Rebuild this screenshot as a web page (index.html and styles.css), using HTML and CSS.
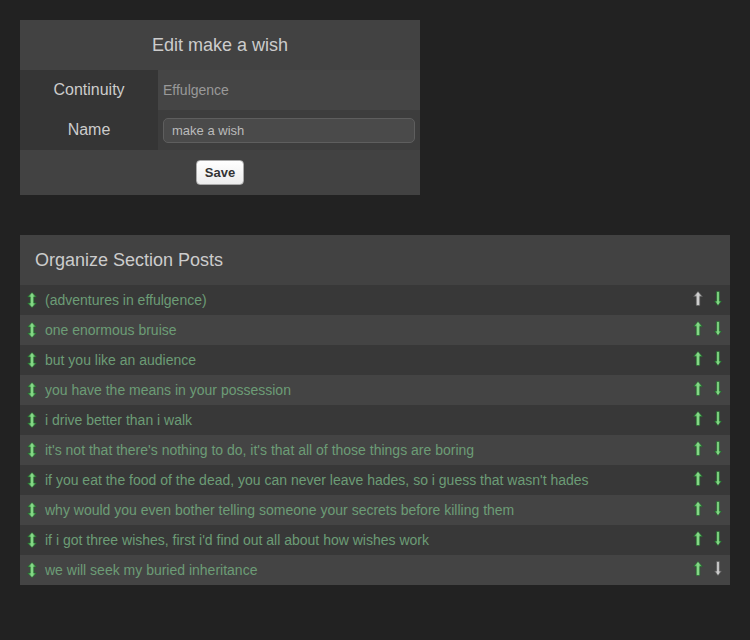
FILE: index.html
```html
<!DOCTYPE html>
<html>
<head>
<meta charset="utf-8">
<link rel="stylesheet" href="styles.css">
</head>
<body>
<div class="edit-box">
  <div class="edit-title">Edit make a wish</div>
  <div class="form-row">
    <div class="form-label">Continuity</div>
    <div class="form-value">Effulgence</div>
  </div>
  <div class="form-row">
    <div class="form-label">Name</div>
    <div class="form-value"><input class="text-input" type="text" value="make a wish"></div>
  </div>
  <div class="form-actions"><button class="save-btn">Save</button></div>
</div>

<div class="org-box">
  <div class="org-title">Organize Section Posts</div>
  <div class="post-list" id="list"></div>
</div>
<script src="app.js"></script>
</body>
</html>
```
FILE: app.js
```js
const posts = [
  "(adventures in effulgence)",
  "one enormous bruise",
  "but you like an audience",
  "you have the means in your possession",
  "i drive better than i walk",
  "it's not that there's nothing to do, it's that all of those things are boring",
  "if you eat the food of the dead, you can never leave hades, so i guess that wasn't hades",
  "why would you even bother telling someone your secrets before killing them",
  "if i got three wishes, first i'd find out all about how wishes work",
  "we will seek my buried inheritance"
];
const defs = `<defs>
<linearGradient id="g" x1="0" x2="1" y1="0" y2="0"><stop offset="0" stop-color="#2f8a3a"/><stop offset="0.5" stop-color="#8fe08f"/><stop offset="1" stop-color="#2f8a3a"/></linearGradient>
<linearGradient id="w" x1="0" x2="1" y1="0" y2="0"><stop offset="0" stop-color="#7a7a7a"/><stop offset="0.5" stop-color="#d8d8d8"/><stop offset="1" stop-color="#7a7a7a"/></linearGradient>
</defs>`;
const both = `<svg class="ico-both" width="10" height="16" viewBox="0 0 10 16"><path d="M5 0.5 L9.5 5 L6.8 5 L6.8 11 L9.5 11 L5 15.5 L0.5 11 L3.2 11 L3.2 5 L0.5 5 Z" fill="url(#g)" stroke="#1f6a2a" stroke-width="0.6"/></svg>`;
const up = (c) => `<svg class="ico-up" width="10" height="15" viewBox="0 0 10 15"><path d="M5 0.5 L9.5 5.5 L6.8 5.5 L6.8 14.5 L3.2 14.5 L3.2 5.5 L0.5 5.5 Z" fill="url(#${c})" stroke="${c==='g'?'#1f6a2a':'#5a5a5a'}" stroke-width="0.6"/></svg>`;
const down = (c) => `<svg class="ico-down" width="8" height="15" viewBox="0 0 8 15"><path d="M2.6 0.5 L5.4 0.5 L5.4 10 L7.5 10 L4 14.5 L0.5 10 L2.6 10 Z" fill="url(#${c})" stroke="${c==='g'?'#1f6a2a':'#5a5a5a'}" stroke-width="0.6"/></svg>`;
const list = document.getElementById('list');
let html = `<svg width="0" height="0" style="position:absolute">${defs}</svg>`;
posts.forEach((p, i) => {
  html += `<div class="post-row">
    <span class="drag">${both}</span>
    <a class="post-link">${p}</a>
    <span class="moves"><span class="mv">${up(i === 0 ? 'w' : 'g')}</span><span class="mv">${down(i === posts.length - 1 ? 'w' : 'g')}</span></span>
  </div>`;
});
list.innerHTML = html;
```
FILE: styles.css
```css
html, body { margin: 0; padding: 0; }
body {
  background: #222222;
  font-family: "Liberation Sans", Arial, sans-serif;
  padding: 20px;
  color: #cccccc;
}
.edit-box {
  width: 400px;
  background: #424242;
}
.edit-title {
  height: 50px;
  line-height: 50px;
  text-align: center;
  font-size: 18px;
  color: #cccccc;
}
.form-row {
  display: flex;
  height: 40px;
}
.form-label {
  width: 138px;
  background: #353535;
  font-size: 16px;
  color: #cccccc;
  text-align: center;
  line-height: 40px;
}
.form-row:nth-child(2) .form-value { background: #454545; }
.form-row:nth-child(3) .form-value { background: #3d3d3d; }
.form-value {
  flex: 1;
  display: flex;
  align-items: center;
  padding-left: 5px;
  padding-right: 5px;
  font-size: 14px;
  color: #999999;
}
.text-input {
  box-sizing: border-box;
  width: 100%;
  height: 25px;
  border: 1px solid #5e5e5e;
  border-radius: 5px;
  background: #4a4a4a;
  color: #bbbbbb;
  font-family: "Liberation Sans", Arial, sans-serif;
  font-size: 13px;
  padding: 0 8px;
  outline: none;
}
.form-actions {
  height: 45px;
  display: flex;
  justify-content: center;
  align-items: center;
}
.save-btn {
  width: 48px;
  height: 25px;
  background: linear-gradient(#ffffff, #ececec);
  border: 1px solid #aaaaaa;
  border-radius: 4px;
  font-family: "Liberation Sans", Arial, sans-serif;
  font-weight: bold;
  font-size: 13px;
  color: #333333;
  padding: 0;
}
.org-box {
  margin-top: 40px;
  width: 710px;
  background: #424242;
}
.org-title {
  height: 50px;
  line-height: 50px;
  padding-left: 15px;
  font-size: 18px;
  color: #cccccc;
}
.post-row {
  height: 30px;
  display: flex;
  align-items: center;
  padding-left: 7px;
  padding-right: 8px;
  background: #444444;
}
.post-row:nth-child(even) { background: #383838; }
.drag { display: flex; width: 18px; margin-bottom: 1px; }
.post-link {
  flex: 1;
  font-size: 14px;
  color: #6c9c76;
}
.moves { display: flex; align-items: center; gap: 11px; margin-bottom: 4px; }
.mv { display: flex; }
```
